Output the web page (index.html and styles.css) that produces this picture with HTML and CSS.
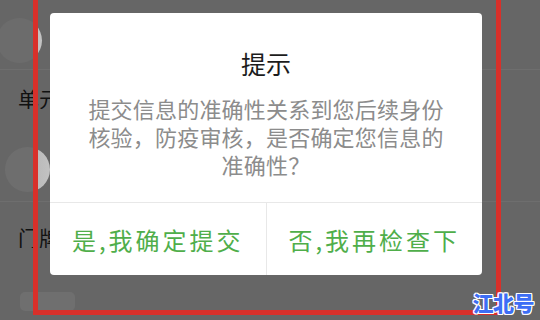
FILE: index.html
```html
<!DOCTYPE html>
<html lang="zh-CN">
<head>
<meta charset="utf-8">
<title>提示</title>
<link rel="stylesheet" href="styles.css">
</head>
<body>
<div class="screen">
  <div class="avatar avatar-a"></div>
  <div class="sep sep-a"></div>
  <div class="name name-a">单元号</div>
  <div class="avatar avatar-b"></div>
  <div class="sep sep-b"></div>
  <div class="name name-b">门牌号</div>
  <div class="pill"></div>
</div>

<div class="dialog">
  <div class="dialog-title">提示</div>
  <div class="dialog-body">
    <div class="line">提交信息的准确性关系到您后续身份</div>
    <div class="line">核验，防疫审核，是否确定您信息的</div>
    <div class="line">准确性？</div>
  </div>
  <div class="dialog-footer">
    <div class="btn">是,我确定提交</div>
    <div class="btn btn-right">否,我再检查下</div>
  </div>
</div>

<div class="mark"></div>
<div class="watermark">江北号</div>
</body>
</html>
```
FILE: styles.css
```css
html, body {
  margin: 0;
  padding: 0;
}
body {
  width: 540px;
  height: 320px;
  overflow: hidden;
  position: relative;
  background: #666666;
  font-family: "Noto Sans CJK SC", "Noto Sans", sans-serif;
}
.screen {
  display: flex;
  flex-direction: column;
  align-items: flex-start;
}
.avatar {
  width: 45px;
  height: 45px;
  border-radius: 50%;
  flex: none;
}
.avatar-a {
  margin-top: 18px;
  margin-left: -3px;
  background: linear-gradient(90deg, #6c6c6c 0, #6c6c6c 36px, #bdbdbd 37px, #c4c4c4 45px);
}
.avatar-b {
  margin-top: 38px;
  margin-left: 5px;
  background: linear-gradient(90deg, #6e6e6e 0, #6e6e6e 28px, #b9b9b9 29px, #c2c2c2 45px);
}
.sep {
  align-self: stretch;
  height: 1px;
  background: #6e6e6e;
}
.sep-a { margin-top: 6px; }
.sep-b { margin-top: 9px; }
.name {
  margin-left: 18px;
  width: 32px;
  overflow: hidden;
  font-size: 21px;
  line-height: 22px;
  color: #111111;
  white-space: nowrap;
}
.name-a { margin-top: 17px; }
.name-b { margin-top: 24px; }
.pill {
  margin-top: 44px;
  margin-left: 20px;
  width: 55px;
  height: 19px;
  border-radius: 5px;
  background: #6f6f6f;
}

.dialog {
  position: absolute;
  left: 50px;
  top: 13px;
  width: 432px;
  height: 262px;
  background: #ffffff;
  border-radius: 4px;
  display: flex;
  flex-direction: column;
}
.dialog-title {
  padding-top: 38px;
  font-size: 25px;
  line-height: 25px;
  color: #1c1c1c;
  text-align: center;
}
.dialog-body {
  margin-top: 18px;
  padding: 0 30px;
  font-size: 22px;
  color: #8c8c8c;
  text-align: center;
  letter-spacing: 0.2px;
}
.line {
  height: 28px;
  line-height: 28px;
  white-space: nowrap;
}
.dialog-footer {
  margin-top: auto;
  height: 72px;
  border-top: 1px solid #e8e8e8;
  display: flex;
}
.btn {
  flex: 1;
  display: flex;
  align-items: center;
  justify-content: center;
  font-size: 24px;
  letter-spacing: 3px;
  color: #4fae4a;
  white-space: nowrap;
}
.btn-right {
  border-left: 1px solid #e8e8e8;
}

.mark {
  position: absolute;
  left: 33px;
  top: -10px;
  width: 468px;
  height: 325px;
  box-sizing: border-box;
  border: 5px solid #d8302a;
  border-top: none;
}
.watermark {
  position: absolute;
  right: 6px;
  bottom: 6px;
  font-size: 21px;
  line-height: 24px;
  font-weight: 900;
  color: #3d6ef5;
  letter-spacing: -0.5px;
  text-shadow: 1px 0 0 #fff, -1px 0 0 #fff, 0 1px 0 #fff, 0 -1px 0 #fff,
               1px 1px 0 #fff, -1px -1px 0 #fff, 1px -1px 0 #fff, -1px 1px 0 #fff;
}
```
